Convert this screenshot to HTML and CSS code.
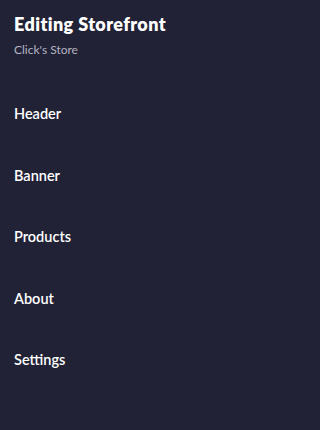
FILE: index.html
```html
<!DOCTYPE html>
<html>
<head>
<meta charset="utf-8">
<link rel="stylesheet" href="styles.css">
</head>
<body>
<div class="page">
  <header class="head">
    <h1 class="title">Editing Storefront</h1>
    <p class="sub">Click's Store</p>
  </header>
  <nav class="menu">
    <div class="item">Header</div>
    <div class="item">Banner</div>
    <div class="item">Products</div>
    <div class="item">About</div>
    <div class="item">Settings</div>
  </nav>
</div>
</body>
</html>
```
FILE: styles.css
```css
html, body {
  margin: 0;
  padding: 0;
  background: #222236;
}
.page {
  width: 320px;
  height: 430px;
  background: #222236;
  font-family: "Lato", "Noto Sans", sans-serif;
  color: #ffffff;
  padding: 0 14px;
  box-sizing: border-box;
}
.head {
  padding-top: 13px;
}
.title {
  margin: 0;
  font-size: 18px;
  line-height: 22px;
  font-weight: 800;
  letter-spacing: 0.4px;
}
.sub {
  margin: 6px 0 0;
  font-size: 12px;
  line-height: 17px;
  color: #b4b4c2;
}
.menu {
  display: flex;
  flex-direction: column;
  margin-top: 25px;
}
.item {
  height: 61.5px;
  display: flex;
  align-items: center;
  font-size: 14.5px;
  font-weight: 600;
}
```
